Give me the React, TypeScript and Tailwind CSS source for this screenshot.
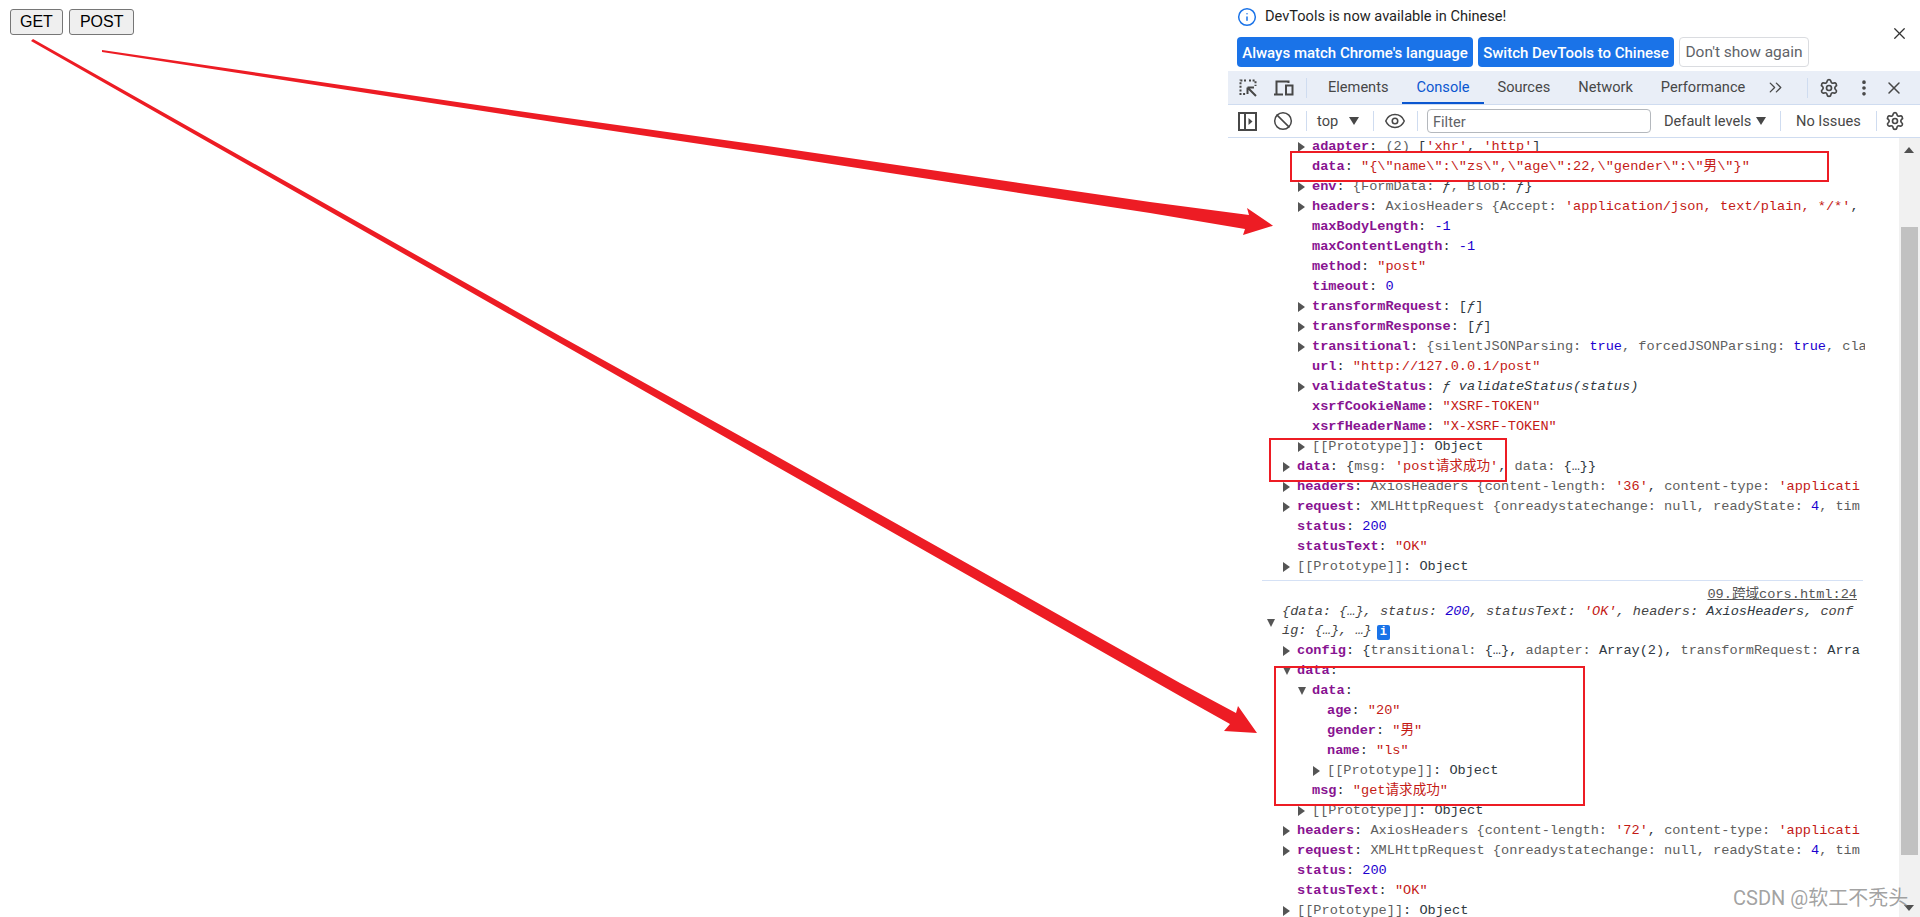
import { ReactNode } from "react";
import { Ban, ChevronsRight, Eye, Info, MoreVertical, Settings, X } from "lucide-react";

const UI_FONT = "font-['Roboto','Noto_Sans_CJK_SC',sans-serif]";

const K = ({ children }: { children: ReactNode }) => <span className="font-bold text-[#881391]">{children}</span>;
const S = ({ children }: { children: ReactNode }) => <span className="text-[#c41a16]">{children}</span>;
const N = ({ children }: { children: ReactNode }) => <span className="text-[#1c00cf]">{children}</span>;
const G = ({ children }: { children: ReactNode }) => <span className="text-[#5e5e5e]">{children}</span>;

function Arrow({ open }: { open?: boolean }) {
  return (
    <span className="absolute top-[5px] left-0 w-[8px] h-[10px] -ml-[14px]">
      <svg width="8" height="10" viewBox="0 0 8 10">
        {open ? <path d="M0 1 L8 1 L4 9 Z" fill="#555" /> : <path d="M0 0 L7 5 L0 10 Z" fill="#555" />}
      </svg>
    </span>
  );
}

function Row({ level, arrow, open, children }: { level: 0 | 1 | 2; arrow?: boolean; open?: boolean; children: ReactNode }) {
  const pad = level === 0 ? "pl-[69px]" : level === 1 ? "pl-[84px]" : "pl-[99px]";
  return (
    <div className={`h-[20px] leading-[20px] whitespace-nowrap ${pad}`}>
      <div className="relative overflow-visible">
        {arrow && <Arrow open={open} />}
        {children}
      </div>
    </div>
  );
}

function Proto({ level }: { level: 0 | 1 | 2 }) {
  return (
    <Row level={level} arrow>
      <G>[[Prototype]]</G>: <span className="text-[#303942]">Object</span>
    </Row>
  );
}

function InspectIcon() {
  return (
    <svg width="20" height="20" viewBox="0 0 20 20" fill="none" stroke="#474747">
      <path d="M8 2.5H2.5V16H8" strokeWidth="2" strokeDasharray="2 1.6" />
      <path d="M11 2.5H17.5V8" strokeWidth="2" strokeDasharray="2 1.6" />
      <path d="M9.5 9.5H16M9.5 9.5V16M9.5 9.5L18 18" strokeWidth="2" />
    </svg>
  );
}

function DeviceIcon() {
  return (
    <svg width="21" height="20" viewBox="0 0 21 20" fill="none" stroke="#474747" strokeWidth="2">
      <path d="M1 16.5H10M3.5 16V3.5H15.5V5" />
      <rect x="13" y="7.5" width="6.5" height="9" />
    </svg>
  );
}

function SidebarIcon() {
  return (
    <svg width="19" height="19" viewBox="0 0 19 19" fill="none" stroke="#474747" strokeWidth="2">
      <rect x="1" y="1" width="17" height="17" />
      <path d="M7 1V18" />
      <path d="M10.5 6L14.5 9.5L10.5 13Z" fill="#474747" stroke="none" />
    </svg>
  );
}

function Sep() {
  return <div className="w-px h-[20px] bg-[#cfdcf0] shrink-0" />;
}

function Tab({ label, active }: { label: string; active?: boolean }) {
  return (
    <div
      className={`h-full flex items-center px-[14px] pt-[3px] shrink-0 border-b-2 ${
        active ? "text-[#0b57d0] border-[#0b57d0]" : "text-[#474747] border-transparent"
      }`}
    >
      {label}
    </div>
  );
}

function InfoBar() {
  return (
    <div className={`relative h-[71px] bg-white pl-[9px] pt-[6px] text-[14.6px] ${UI_FONT}`}>
      <div className="flex items-center h-[22px] gap-[8px] text-[#1f1f1f]">
        <Info size={20} className="text-[#1a73e8]" strokeWidth={1.8} />
        <span>DevTools is now available in Chinese!</span>
      </div>
      <div className="flex gap-[5px] mt-[9px] font-medium">
        <button className="w-[236px] h-[30px] pt-[2px] rounded-[4px] bg-[#1a73e8] text-white text-[15px] whitespace-nowrap">Always match Chrome's language</button>
        <button className="w-[196px] h-[30px] pt-[2px] rounded-[4px] bg-[#1a73e8] text-white text-[15px] whitespace-nowrap">Switch DevTools to Chinese</button>
        <button className="w-[130px] h-[30px] pt-[2px] rounded-[4px] border border-[#dadce0] text-[#5f6368] font-normal text-[15.5px] whitespace-nowrap">Don't show again</button>
      </div>
      <X size={19} strokeWidth={1.6} className="absolute top-[24px] right-[11px] text-[#333]" />
    </div>
  );
}

function TabBar() {
  return (
    <div className={`h-[34px] flex items-center bg-[#e9eef7] border-b border-[#cfdcf0] text-[14.6px] ${UI_FONT}`}>
      <div className="w-[39px] flex justify-center"><InspectIcon /></div>
      <div className="w-[32px] flex justify-center mr-[7px]"><DeviceIcon /></div>
      <Sep />
      <div className="ml-[7px] flex h-full">
        <Tab label="Elements" />
        <Tab label="Console" active />
        <Tab label="Sources" />
        <Tab label="Network" />
        <Tab label="Performance" />
      </div>
      <ChevronsRight size={21} strokeWidth={1.5} className="ml-[6px] text-[#474747]" />
      <div className="ml-[21px]"><Sep /></div>
      <Settings size={20} strokeWidth={2} className="ml-[11px] text-[#474747]" />
      <MoreVertical size={20} strokeWidth={2.4} className="ml-[15px] text-[#474747]" />
      <X size={20} strokeWidth={1.8} className="ml-[10px] text-[#474747]" />
    </div>
  );
}

function Toolbar() {
  return (
    <div className={`h-[33px] flex items-center whitespace-nowrap bg-white border-b border-[#cfdcf0] text-[14.6px] text-[#474747] ${UI_FONT}`}>
      <div className="ml-[10px]"><SidebarIcon /></div>
      <Ban size={20} strokeWidth={1.8} className="ml-[16px]" />
      <div className="ml-[13px]"><Sep /></div>
      <span className="ml-[10px] w-[32px] pt-[2px]">top</span>
      <span className="w-0 h-0 border-x-[5px] border-x-transparent border-t-[8px] border-t-[#474747]" />
      <div className="ml-[14px]"><Sep /></div>
      <Eye size={22} strokeWidth={1.7} className="ml-[10px]" />
      <div className="ml-[11px]"><Sep /></div>
      <div className="ml-[9px] w-[224px] h-[24px] rounded-[4px] border border-[#b4b8bd] pl-[5px] leading-[25px] text-[#5f6368]">Filter</div>
      <span className="ml-[13px] w-[92px] pt-[2px]">Default levels</span>
      <span className="w-0 h-0 border-x-[5px] border-x-transparent border-t-[8px] border-t-[#474747]" />
      <div className="ml-[14px]"><Sep /></div>
      <span className="ml-[15px] w-[62px] pt-[2px]">No Issues</span>
      <div className="ml-[18px]"><Sep /></div>
      <Settings size={20} strokeWidth={2} className="ml-[8px]" />
    </div>
  );
}

function ConsoleLog() {
  return (
    <div className="flex-1 overflow-hidden text-[13.6px] text-[#303942] font-['Liberation_Mono','Noto_Sans_CJK_SC',monospace] -mt-px">
      <Row level={1} arrow><K>adapter</K>: <G>(2)</G> [<S>'xhr'</S>, <S>'http'</S>]</Row>
      <Row level={1}><K>data</K>: <S>{'"{\\"name\\":\\"zs\\",\\"age\\":22,\\"gender\\":\\"男\\"}"'}</S></Row>
      <Row level={1} arrow><K>env</K>: <G>{"{FormData: "}</G><i>ƒ</i><G>, Blob: </G><i>ƒ</i>{"}"}</Row>
      <Row level={1} arrow><K>headers</K>: <G>AxiosHeaders {"{Accept: "}</G><S>'application/json, text/plain, */*'</S>,</Row>
      <Row level={1}><K>maxBodyLength</K>: <N>-1</N></Row>
      <Row level={1}><K>maxContentLength</K>: <N>-1</N></Row>
      <Row level={1}><K>method</K>: <S>"post"</S></Row>
      <Row level={1}><K>timeout</K>: <N>0</N></Row>
      <Row level={1} arrow><K>transformRequest</K>: [<i>ƒ</i>]</Row>
      <Row level={1} arrow><K>transformResponse</K>: [<i>ƒ</i>]</Row>
      <Row level={1} arrow><K>transitional</K>: <G>{"{silentJSONParsing: "}</G><N>true</N><G>, forcedJSONParsing: </G><N>true</N><G>, cla</G></Row>
      <Row level={1}><K>url</K>: <S>"http://127.0.0.1/post"</S></Row>
      <Row level={1} arrow><K>validateStatus</K>: <i>ƒ validateStatus(status)</i></Row>
      <Row level={1}><K>xsrfCookieName</K>: <S>"XSRF-TOKEN"</S></Row>
      <Row level={1}><K>xsrfHeaderName</K>: <S>"X-XSRF-TOKEN"</S></Row>
      <Proto level={1} />
      <Row level={0} arrow><K>data</K>: {"{"}<G>msg: </G><S>'post请求成功'</S>, <G>data: </G>{"{…}}"}</Row>
      <Row level={0} arrow><K>headers</K>: <G>AxiosHeaders {"{content-length: "}</G><S>'36'</S>, <G>content-type: </G><S>'applicati</S></Row>
      <Row level={0} arrow><K>request</K>: <G>XMLHttpRequest {"{onreadystatechange: null, readyState: "}</G><N>4</N><G>, tim</G></Row>
      <Row level={0}><K>status</K>: <N>200</N></Row>
      <Row level={0}><K>statusText</K>: <S>"OK"</S></Row>
      <Proto level={0} />

      <div className="mt-[3px] ml-[34px] mr-[2px] pr-[6px] border-t border-[#d5e1f5] h-[21px] text-right leading-[28px] text-[#545454]">
        <span className="underline">09.跨域cors.html:24</span>
      </div>
      <div className="relative ml-[54px] w-[575px] leading-[19px] pt-[1px] pb-[1px] italic break-all text-[#444]">
        <span className="absolute not-italic left-0 top-[17px] -ml-[15px]">
          <svg width="8" height="10" viewBox="0 0 8 10"><path d="M0 1 L8 1 L4 9 Z" fill="#555" /></svg>
        </span>
        {"{data: {…}, status: "}<N>200</N>{", statusText: "}<S>'OK'</S>{", headers: "}<span className="text-[#303942]">AxiosHeaders</span>{", config: {…}, …}"}
        <span className="inline-block not-italic w-[13px] h-[15px] ml-[5px] rounded-[2px] bg-[#1a73e8] text-white text-[12px] leading-[15px] text-center font-bold align-[-1px]">i</span>
      </div>
      <Row level={1} arrow={false}>
        <span className="relative block -ml-[15px]"><Arrow /><K>config</K>: {"{"}<G>transitional: </G>{"{…}"}, <G>adapter: </G><span>Array(2)</span>, <G>transformRequest: </G><span>Arra</span></span>
      </Row>
      <Row level={0} arrow open><K>data</K>:</Row>
      <Row level={1} arrow open><K>data</K>:</Row>
      <Row level={2}><K>age</K>: <S>"20"</S></Row>
      <Row level={2}><K>gender</K>: <S>"男"</S></Row>
      <Row level={2}><K>name</K>: <S>"ls"</S></Row>
      <Proto level={2} />
      <Row level={1}><K>msg</K>: <S>"get请求成功"</S></Row>
      <Proto level={1} />
      <Row level={0} arrow><K>headers</K>: <G>AxiosHeaders {"{content-length: "}</G><S>'72'</S>, <G>content-type: </G><S>'applicati</S></Row>
      <Row level={0} arrow><K>request</K>: <G>XMLHttpRequest {"{onreadystatechange: null, readyState: "}</G><N>4</N><G>, tim</G></Row>
      <Row level={0}><K>status</K>: <N>200</N></Row>
      <Row level={0}><K>statusText</K>: <S>"OK"</S></Row>
      <Proto level={0} />
    </div>
  );
}

function Scrollbar() {
  return (
    <div className="relative w-[21px] shrink-0 bg-[#f1f1f1]">
      <div className="absolute top-[89px] bottom-[62px] left-[2px] right-[2px] bg-[#c1c1c1]" />
      <span className="absolute top-[9px] left-[5px] w-0 h-0 border-x-[5px] border-x-transparent border-b-[6px] border-b-[#505050]" />
      <span className="absolute bottom-[6px] left-[5px] w-0 h-0 border-x-[5px] border-x-transparent border-t-[6px] border-t-[#505050]" />
    </div>
  );
}

export default function App() {
  return (
    <div className="relative flex h-[917px] w-full overflow-hidden bg-white">
      <div className="flex-1 flex items-start gap-[6px] pl-[10px] pt-[9px] font-['Liberation_Sans',Arial,sans-serif]">
        <button className="h-[26px] px-[9px] text-[16px] text-black bg-[#efefef] border border-[#767676] rounded-[3px]">GET</button>
        <button className="h-[26px] px-[10px] text-[16px] text-black bg-[#efefef] border border-[#767676] rounded-[3px]">POST</button>
      </div>

      <div className="w-[692px] h-full flex flex-col shrink-0 overflow-hidden">
        <InfoBar />
        <TabBar />
        <Toolbar />
        <div className="flex-1 flex min-h-0">
          <div className="w-[637px] overflow-hidden flex flex-col">
            <ConsoleLog />
          </div>
          <div className="flex-1" />
          <Scrollbar />
        </div>
      </div>

      {/* annotations drawn on top of the screenshot */}
      <svg className="absolute inset-0 pointer-events-none" width="1920" height="917" viewBox="0 0 1920 917">
        <polygon
          fill="#ed1c24"
          points="102,50 560,117 760,145 1150,202 1249,215 1247,208 1273,225.7 1243,235 1245,229 1150,213 760,153 560,123 102,52"
        />
        <polygon
          fill="#ed1c24"
          points="33,39 560,336 760,447 1180,683 1236,713 1238,706 1257,733 1224,731 1230,724 1180,696 760,457 560,343 31,41"
        />
      </svg>
      <div className="absolute left-[1290px] top-[151px] w-[539px] h-[31px] border-2 border-[#ed1c24]" />
      <div className="absolute left-[1269px] top-[438px] w-[238px] h-[44px] border-2 border-[#ed1c24]" />
      <div className="absolute left-[1274px] top-[666px] w-[311px] h-[140px] border-2 border-[#ed1c24]" />
      <div className="absolute left-[1733px] top-[884px] text-[20px] leading-[28px] text-[#8a8a8a]/80 font-['Roboto','Noto_Sans_CJK_SC',sans-serif] whitespace-nowrap">
        CSDN @软工不秃头
      </div>
    </div>
  );
}
